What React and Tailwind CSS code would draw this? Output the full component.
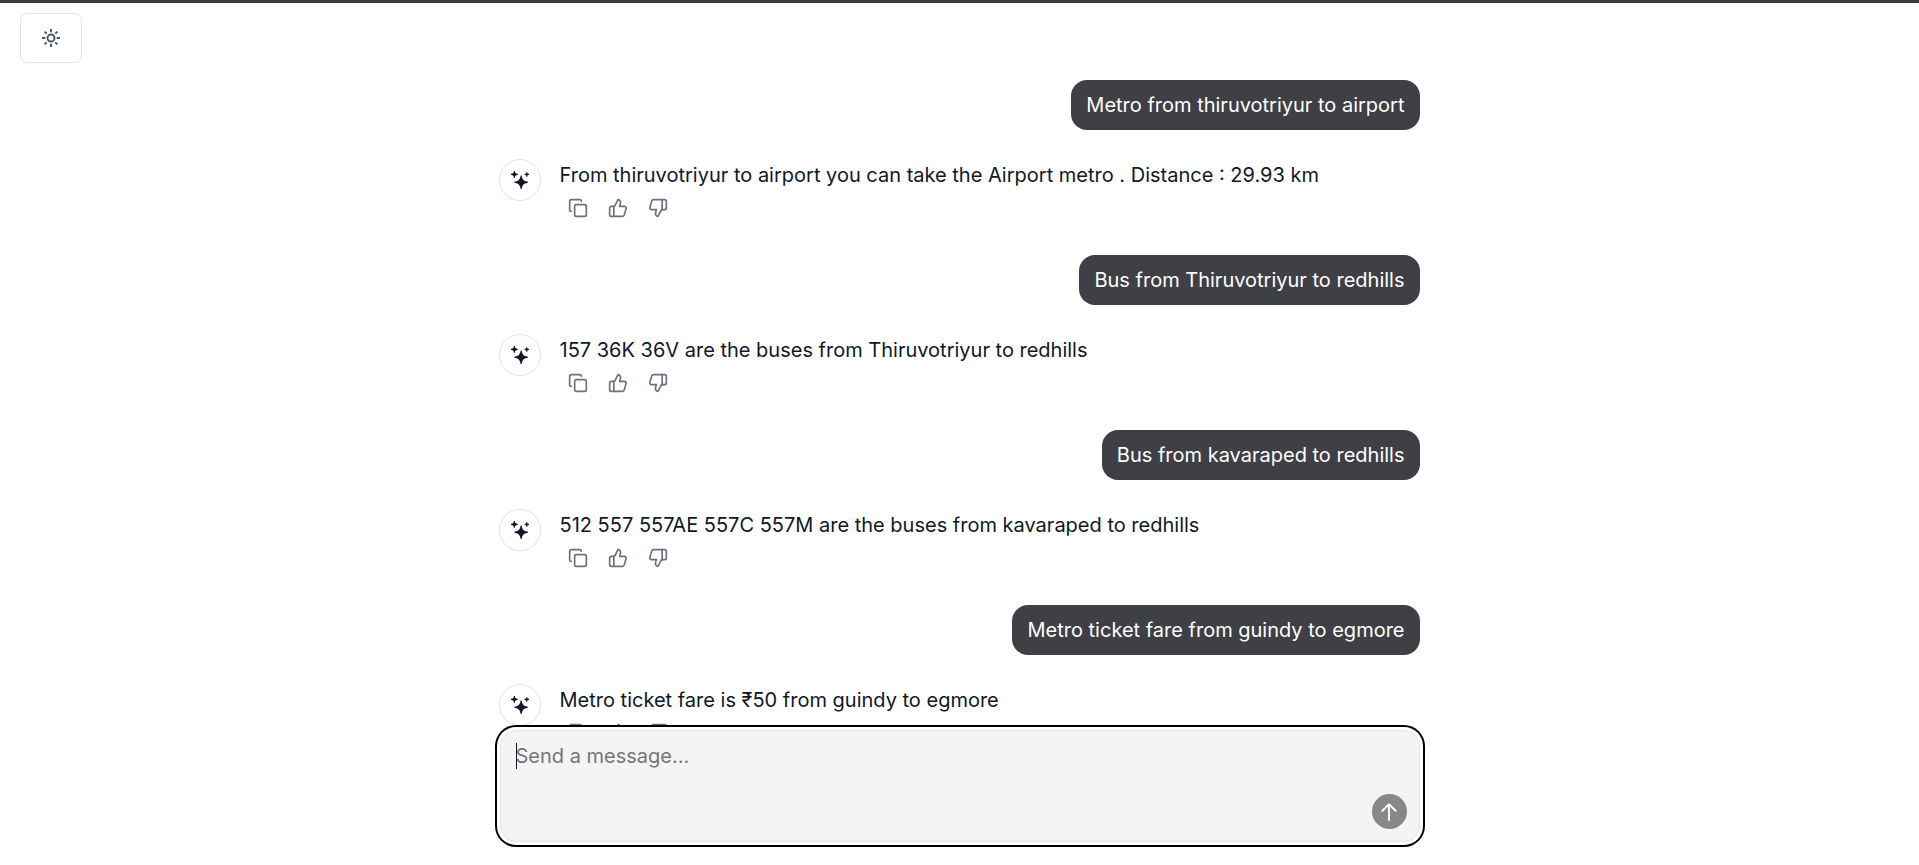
import { Copy, ThumbsDown, ThumbsUp } from "lucide-react";

const conversation = [
  {
    question: "Metro from thiruvotriyur to airport",
    answer:
      "From thiruvotriyur to airport you can take the Airport metro . Distance : 29.93 km",
  },
  {
    question: "Bus from Thiruvotriyur to redhills",
    answer: "157 36K 36V are the buses from Thiruvotriyur to redhills",
  },
  {
    question: "Bus from kavaraped to redhills",
    answer: "512 557 557AE 557C 557M are the buses from kavaraped to redhills",
  },
  {
    question: "Metro ticket fare from guindy to egmore",
    answer: "Metro ticket fare is ₹50 from guindy to egmore",
  },
];

const actions = [
  { label: "Copy", Icon: Copy },
  { label: "Good response", Icon: ThumbsUp },
  { label: "Bad response", Icon: ThumbsDown },
];

function SunIcon() {
  return (
    <svg
      viewBox="0 0 18 18"
      fill="none"
      stroke="currentColor"
      strokeWidth="1.9"
      className="size-[18px]"
      aria-hidden="true"
    >
      <circle cx="9" cy="9" r="3.5" />
      <path d="M9 0V3.3M9 14.7V18M0 9H3.3M14.7 9H18M2.6 2.6L4.7 4.7M13.3 13.3L15.4 15.4M2.6 15.4L4.7 13.3M13.3 4.7L15.4 2.6" />
    </svg>
  );
}

function SparklesIcon() {
  return (
    <svg viewBox="0 0 16 16" fill="currentColor" className="size-[18px]" aria-hidden="true">
      <path d="M2.5 0.5V0H3.5V0.5C3.5 1.60457 4.39543 2.5 5.5 2.5H6V3V3.5H5.5C4.39543 3.5 3.5 4.39543 3.5 5.5V6H3H2.5V5.5C2.5 4.39543 1.60457 3.5 0.5 3.5H0V3V2.5H0.5C1.60457 2.5 2.5 1.60457 2.5 0.5Z" />
      <path d="M14.5 4.5V5H13.5V4.5C13.5 3.94772 13.0523 3.5 12.5 3.5H12V3V2.5H12.5C13.0523 2.5 13.5 2.05228 13.5 1.5V1H14H14.5V1.5C14.5 2.05228 14.9477 2.5 15.5 2.5H16V3V3.5H15.5C14.9477 3.5 14.5 3.94772 14.5 4.5Z" />
      <path d="M8.40706 4.92939L8.5 4H9.5L9.59294 4.92939C9.82973 7.29734 11.7027 9.17027 14.0706 9.40706L15 9.5V10.5L14.0706 10.5929C11.7027 10.8297 9.82973 12.7027 9.59294 15.0706L9.5 16H8.5L8.40706 15.0706C8.17027 12.7027 6.29734 10.8297 3.92939 10.5929L3 10.5V9.5L3.92939 9.40706C6.29734 9.17027 8.17027 7.29734 8.40706 4.92939Z" />
    </svg>
  );
}

function ArrowUpIcon() {
  return (
    <svg viewBox="0 0 16 16" fill="currentColor" className="size-5" aria-hidden="true">
      <path
        fillRule="evenodd"
        d="M8.70711 1.39644C8.31659 1.00592 7.68342 1.00592 7.2929 1.39644L2.21968 6.46966L1.68935 6.99999L2.75001 8.06065L3.28034 7.53032L7.25001 3.56065V14.25V15H8.75001V14.25V3.56065L12.7197 7.53032L13.25 8.06065L14.3107 6.99999L13.7803 6.46966L8.70711 1.39644Z"
      />
    </svg>
  );
}

function UserMessage({ children }) {
  return (
    <div className="flex justify-end">
      <p className="rounded-2xl bg-[#3f3f46] px-[15px] py-[10px] text-white">{children}</p>
    </div>
  );
}

function BotMessage({ children }) {
  return (
    <div className="flex gap-5">
      <div className="flex size-10 shrink-0 items-center justify-center rounded-full ring-1 ring-neutral-200">
        <SparklesIcon />
      </div>
      <div className="min-w-0">
        <p>{children}</p>
        <div className="flex gap-1">
          {actions.map(({ label, Icon }) => (
            <button
              key={label}
              type="button"
              aria-label={label}
              className="flex h-9 w-9 items-center justify-center text-gray-500"
            >
              <Icon className="size-5" />
            </button>
          ))}
        </div>
      </div>
    </div>
  );
}

export default function App() {
  return (
    <div className="flex h-screen flex-col border-t-3 border-[#3b3b3b] bg-white font-['Inter','Noto_Sans',sans-serif] text-[20px] leading-[30px] text-gray-900">
      <header className="flex px-5 pt-[10px]">
        <button
          type="button"
          aria-label="Toggle theme"
          className="flex h-[50px] w-[62px] items-center justify-center rounded-[7px] border border-neutral-200 text-gray-600"
        >
          <SunIcon />
        </button>
      </header>

      <main className="min-h-0 flex-1 overflow-hidden pt-[17px]">
        <div className="mx-auto flex max-w-[920px] flex-col gap-[29px]">
          {conversation.map(({ question, answer }) => (
            <section key={question} className="flex flex-col gap-[30px]">
              <UserMessage>{question}</UserMessage>
              <BotMessage>{answer}</BotMessage>
            </section>
          ))}
        </div>
      </main>

      <form
        className="mx-auto mt-[5px] mb-[23px] w-full max-w-[920px]"
        onSubmit={(event) => event.preventDefault()}
      >
        <div className="relative flex h-28 rounded-2xl border border-neutral-200 bg-[#f4f4f4] ring-2 ring-black ring-offset-3">
          <textarea
            aria-label="Message"
            placeholder="Send a message..."
            className="w-full resize-none rounded-2xl bg-transparent px-[15px] py-[10px] caret-transparent outline-none placeholder:text-[#757575]"
          />
          <span aria-hidden="true" className="absolute top-3 left-[15px] h-[26px] w-px bg-gray-900" />
          <button
            type="submit"
            aria-label="Send message"
            className="absolute right-3 bottom-3 flex size-[35px] items-center justify-center rounded-full bg-[#888888] text-white"
          >
            <ArrowUpIcon />
          </button>
        </div>
      </form>
    </div>
  );
}
